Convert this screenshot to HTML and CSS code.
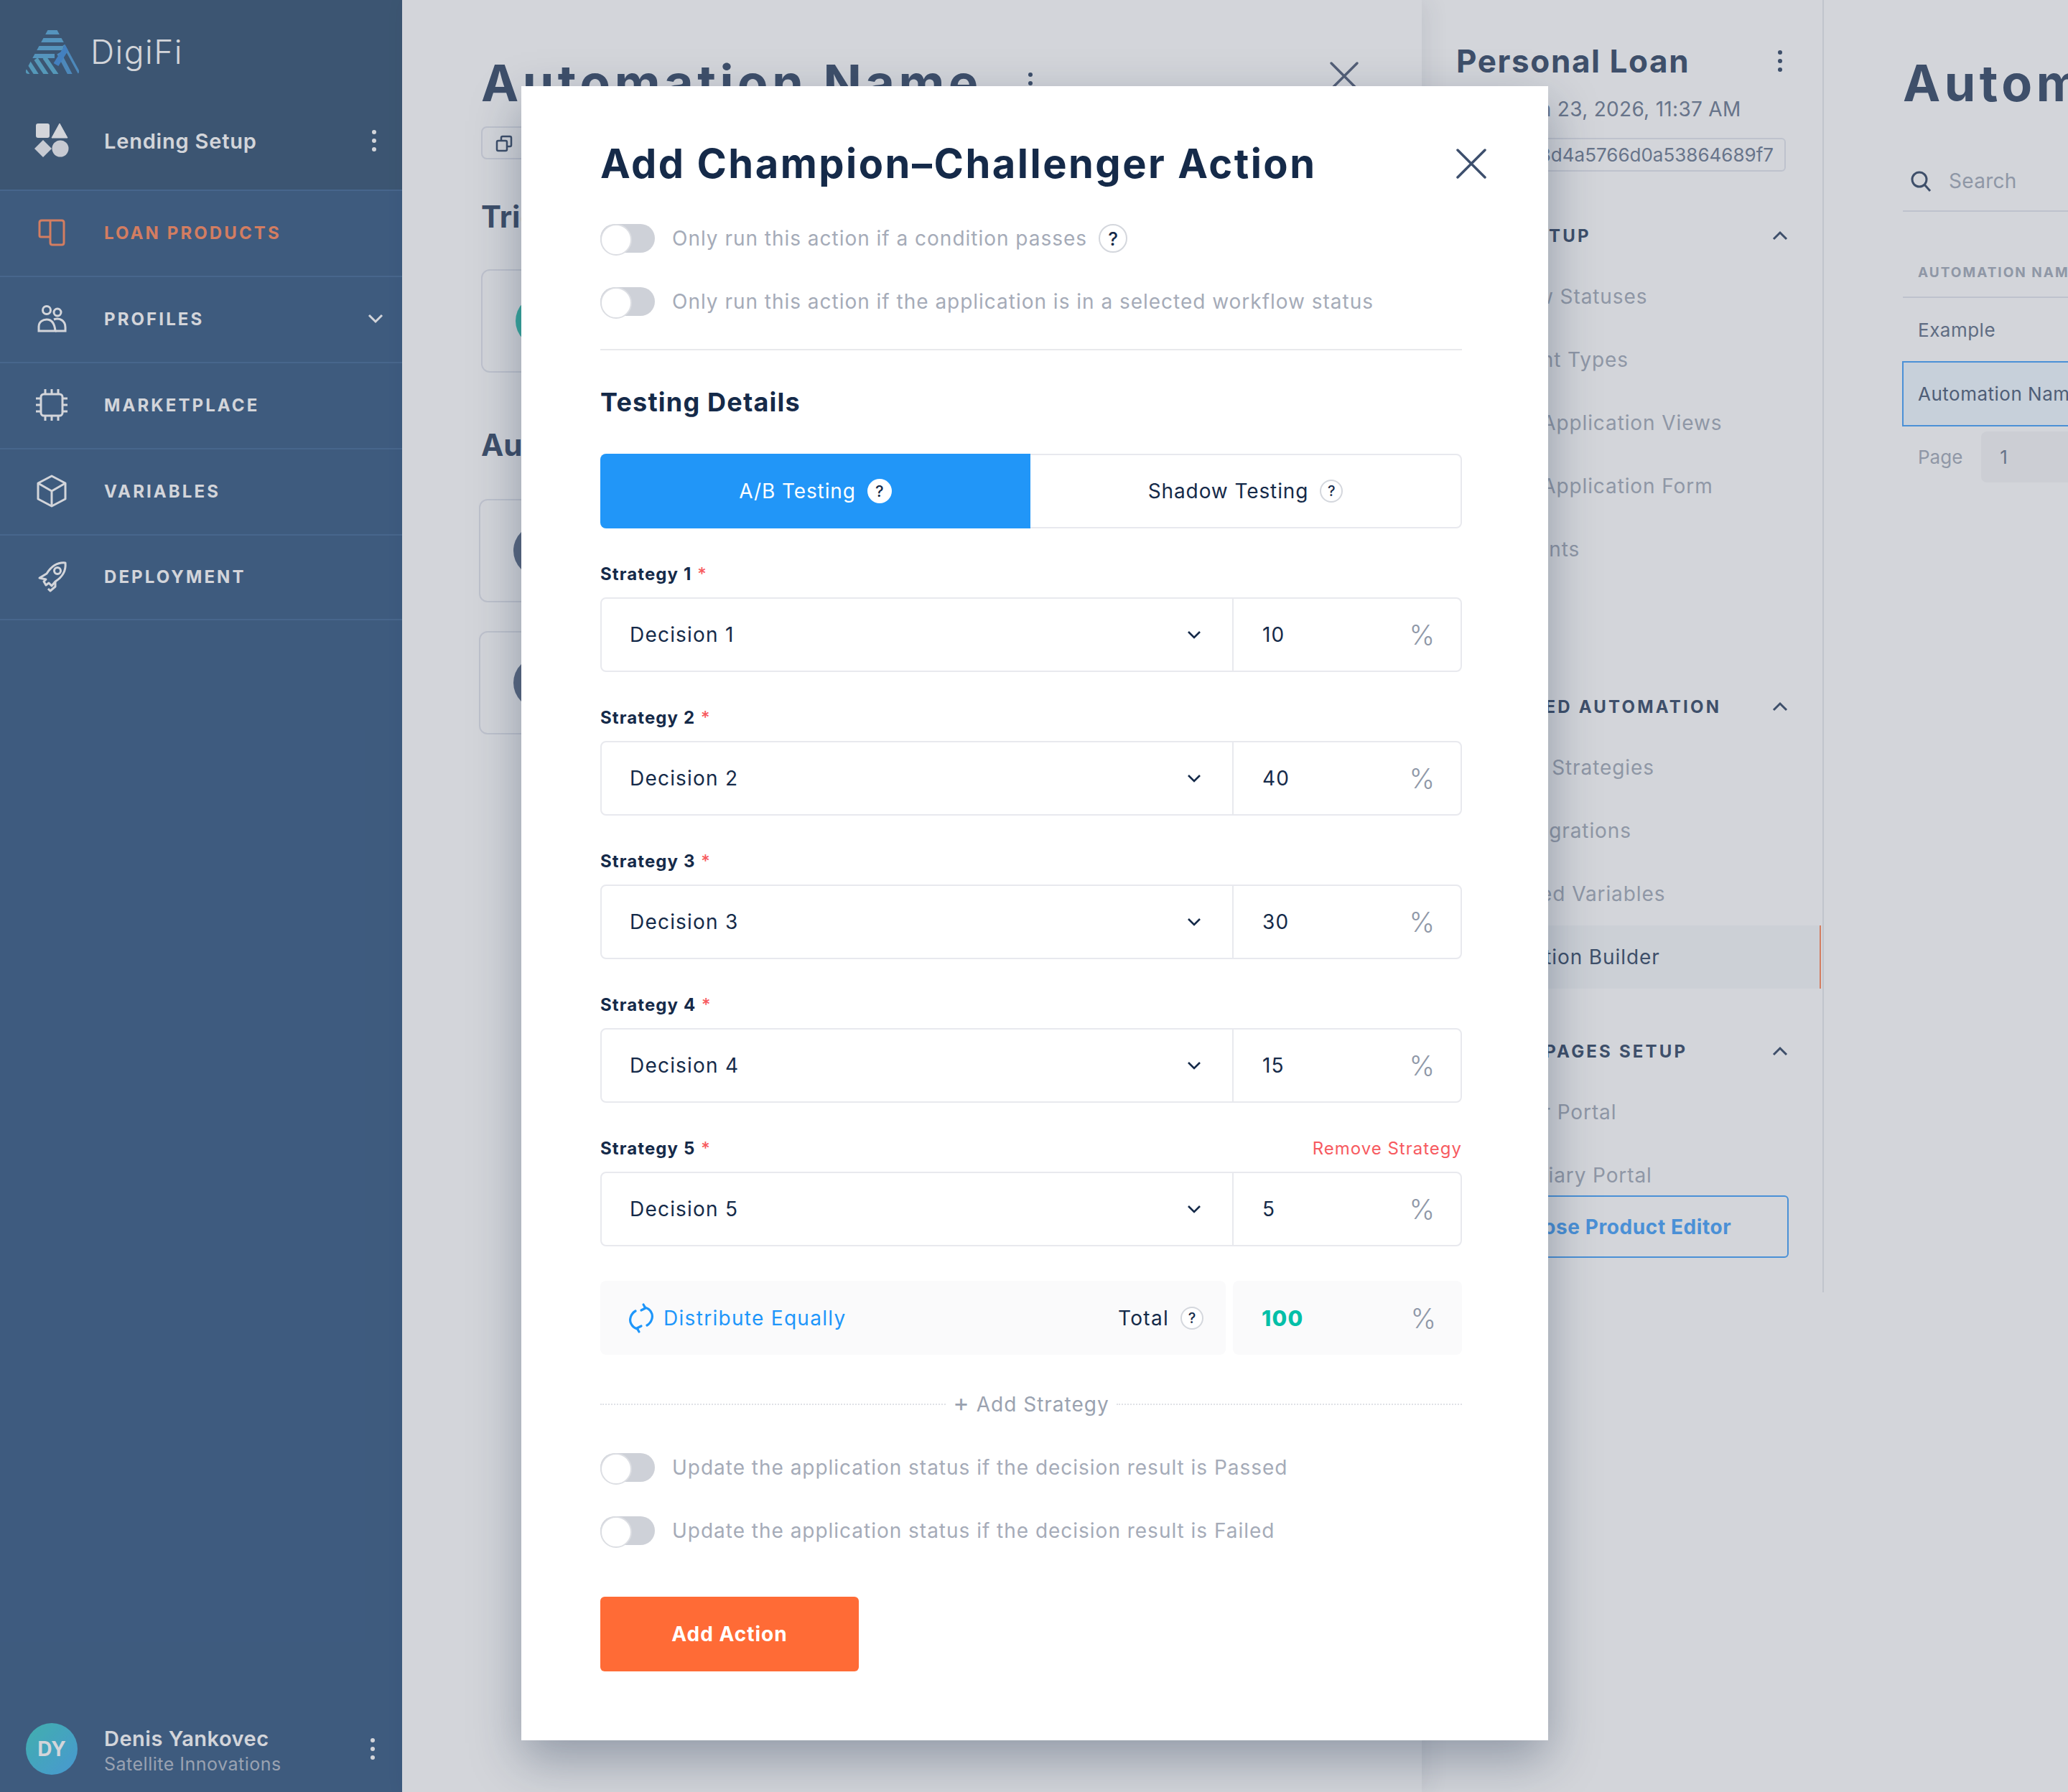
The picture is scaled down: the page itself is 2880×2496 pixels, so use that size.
FILE: index.html
```html
<!DOCTYPE html>
<html lang="en">
<head>
	<meta charset="UTF-8">
	<title>Add Champion-Challenger Action</title>
	<link rel="stylesheet" href="styles.css">
</head>
<body>
<div class="app">
	<aside class="sidebar">
		<div class="sideTop">
			<div class="logo">
				<svg width="74" height="64" viewBox="0 0 74 64">
					<defs>
						<clipPath id="logoClip"><path d="M31 1 Q37 -2 43 1 L74 58 Q75 63 70 63 L4 63 Q-1 63 0 58 Z"/></clipPath>
					</defs>
					<g clip-path="url(#logoClip)" fill="none" stroke-width="6">
						<path d="M0 5H74M0 16H74M0 27H52M0 38H40" stroke="#62aedb"/>
						<path d="M-10 46L8 72M2 44L20 72M14 42L34 72M26 40L48 72" stroke="#62b3d6"/>
						<path d="M54 22L78 66M46 34L66 72" stroke="#589fd8"/>
						<path d="M62 18L42 50" stroke="#4c95df" stroke-width="8"/>
					</g>
				</svg>
				<span class="logoText">DigiFi</span>
			</div>
			<div class="product">
				<svg class="navIcon" width="48" height="48" viewBox="0 0 48 48">
					<rect x="2" y="0" width="19" height="20" rx="3" fill="#fff"/>
					<path d="M35 0 L46 20 H24 Z" fill="#fff" stroke="#fff" stroke-linejoin="round"/>
					<path d="M12 23 L24 35 L12 47 L0 35 Z" fill="#f1f2f6"/>
					<circle cx="36" cy="35" r="11.5" fill="#f1f2f6"/>
				</svg>
				<span class="productName">Lending Setup</span>
				<span class="dots"><i></i><i></i><i></i></span>
			</div>
		</div>
		<nav>
			<a class="navItem active">
				<svg class="navIcon" width="48" height="48" viewBox="0 0 48 48" fill="none" stroke="#ff9268" stroke-width="3" stroke-linejoin="round"><path d="M22 30H9Q7 30 7 28V10Q7 7 10 7H38Q41 7 41 10V38Q41 41 38 41H25Q22 41 22 38V7"/></svg>
				LOAN PRODUCTS
			</a>
			<a class="navItem">
				<svg class="navIcon" width="48" height="48" viewBox="0 0 48 48" fill="none" stroke="#fff" stroke-width="3"><circle cx="17" cy="12" r="5.5"/><circle cx="32" cy="15" r="5"/><path d="M6 41V35C6 28 12 25 17 25C24 25 28 30 29 41Z M6 41H12"/><path d="M27 25C34 22 43 26 43 36V41H29"/></svg>
				PROFILES
				<svg class="navChevron" width="22" height="14" viewBox="0 0 22 14" fill="none" stroke="#fff" stroke-width="3"><path d="M2 2L11 11L20 2"/></svg>
			</a>
			<a class="navItem">
				<svg class="navIcon" width="48" height="48" viewBox="0 0 48 48" fill="none" stroke="#fff" stroke-width="3"><rect x="9" y="9" width="30" height="30" rx="4"/><path d="M15 9V2M24 9V2M33 9V2M15 46V39M24 46V39M33 46V39M9 15H2M9 24H2M9 33H2M46 15H39M46 24H39M46 33H39"/></svg>
				MARKETPLACE
			</a>
			<a class="navItem">
				<svg class="navIcon" width="48" height="48" viewBox="0 0 48 48" fill="none" stroke="#fff" stroke-width="3" stroke-linejoin="round"><path d="M24 3L43 13V35L24 45L5 35V13Z"/><path d="M5 13L24 24L43 13M24 24V45"/></svg>
				VARIABLES
			</a>
			<a class="navItem">
				<svg class="navIcon" width="48" height="48" viewBox="0 0 48 48" fill="none" stroke="#fff" stroke-width="3" stroke-linejoin="round"><path d="M17 20C24 9 33 4 43 5C44 15 40 24 29 31L24 37L20 33L16 36L13 31L16 28L7 26Z"/><path d="M29 31L29 38L22 44L19 41"/><circle cx="32" cy="16" r="4.5"/></svg>
				DEPLOYMENT
			</a>
		</nav>
		<div class="userBox">
			<span class="avatar">DY</span>
			<div class="userText">
				<div class="userName">Denis Yankovec</div>
				<div class="userOrg">Satellite Innovations</div>
			</div>
			<span class="dots"><i></i><i></i><i></i></span>
		</div>
		<div class="collapseTab">
			<svg width="12" height="20" viewBox="0 0 12 20" fill="none" stroke="#fff" stroke-width="2.5"><path d="M10 2L3 10L10 18"/></svg>
		</div>
	</aside>

	<section class="panel panelOne">
		<div class="panelHead">
			<h1 class="bigTitle">Automation Name</h1>
			<span class="dots dotsDark"><i></i><i></i><i></i></span>
			<svg class="panelClose" width="44" height="44" viewBox="0 0 44 44" fill="none" stroke="#5f6c84" stroke-width="3.5" stroke-linecap="round"><path d="M4 4L40 40M40 4L4 40"/></svg>
		</div>
		<div class="copyChip">
			<svg width="24" height="24" viewBox="0 0 24 24" fill="none" stroke="#455874" stroke-width="2.5"><rect x="2" y="8" width="14" height="14" rx="2"/><path d="M8 8V4Q8 2 10 2H20Q22 2 22 4V14Q22 16 20 16H16"/></svg>
		</div>
		<h2 class="subTitle">Trigger Events</h2>
		<div class="flowCard"><span class="flowDot teal"></span></div>
		<h2 class="subTitle subTitleLow">Automation Steps</h2>
		<div class="flowCard lower"><span class="flowDot"></span></div>
		<div class="flowCard lowest"><span class="flowDot"></span></div>
	</section>

	<section class="panel panelTwo">
		<div class="loanHead">
			<h2 class="loanTitle">Personal Loan</h2>
			<span class="dots dotsDark"><i></i><i></i><i></i></span>
		</div>
		<div class="loanDate">Updated Jan 23, 2026, 11:37 AM</div>
		<div class="loanId"><span>68d4a5766d0a53864689f7</span></div>

		<div class="groupHead first">FORM SETUP <svg width="22" height="14" viewBox="0 0 22 14" fill="none" stroke="#455874" stroke-width="3"><path d="M2 12L11 3L20 12"/></svg></div>
		<div class="groupItem">Workflow Statuses</div>
		<div class="groupItem">Document Types</div>
		<div class="groupItem">Custom Application Views</div>
		<div class="groupItem">Custom Application Form</div>
		<div class="groupItem">Agreements</div>

		<div class="groupHead second">ADVANCED AUTOMATION <svg width="22" height="14" viewBox="0 0 22 14" fill="none" stroke="#455874" stroke-width="3"><path d="M2 12L11 3L20 12"/></svg></div>
		<div class="groupItem">Decision Strategies</div>
		<div class="groupItem">Data Integrations</div>
		<div class="groupItem">Calculated Variables</div>
		<div class="groupItem current">Automation Builder</div>

		<div class="groupHead third">PORTAL PAGES SETUP <svg width="22" height="14" viewBox="0 0 22 14" fill="none" stroke="#455874" stroke-width="3"><path d="M2 12L11 3L20 12"/></svg></div>
		<div class="groupItem">Borrower Portal</div>
		<div class="groupItem">Intermediary Portal</div>
		<div class="closeEditor">Close Product Editor</div>
	</section>

	<section class="panel panelThree">
		<h1 class="bigTitle">Automation Name</h1>
		<div class="searchBar">
			<svg width="30" height="30" viewBox="0 0 30 30" fill="none" stroke="#455874" stroke-width="3"><circle cx="13" cy="13" r="10"/><path d="M20 20L28 29"/></svg>
			<span>Search</span>
		</div>
		<div class="tableHead">AUTOMATION NAME</div>
		<div class="tableRow">Example</div>
		<div class="tableRow selected">Automation Name</div>
		<div class="pager"><span>Page</span><span class="pageBox">1</span></div>
	</section>
</div>

<div class="overlay"></div>

<div class="modal">
	<div class="modalHead">
		<h1>Add Champion–Challenger Action</h1>
		<svg class="modalClose" width="44" height="44" viewBox="0 0 44 44" fill="none" stroke="#3d4f6d" stroke-width="3.5" stroke-linecap="round"><path d="M3 3L41 41M41 3L3 41"/></svg>
	</div>

	<div class="toggleRow firstToggle"><span class="toggle"></span><span>Only run this action if a condition passes</span><span class="help">?</span></div>
	<div class="toggleRow"><span class="toggle"></span><span>Only run this action if the application is in a selected workflow status</span></div>
	<div class="divider"></div>

	<h2 class="sectionTitle">Testing Details</h2>
	<div class="tabs">
		<div class="tab tabActive">A/B Testing <span class="help">?</span></div>
		<div class="tab">Shadow Testing <span class="help">?</span></div>
	</div>

	<div class="strategy">
		<div class="strategyLabel"><span>Strategy 1 <em>*</em></span></div>
		<div class="strategyBox">
			<div class="strategySelect">Decision 1<svg width="20" height="12" viewBox="0 0 20 12" fill="none" stroke="#152a49" stroke-width="2.6"><path d="M2 2L10 10L18 2"/></svg></div>
			<div class="strategyPercent"><span>10</span><span class="pct">%</span></div>
		</div>
	</div>
	<div class="strategy">
		<div class="strategyLabel"><span>Strategy 2 <em>*</em></span></div>
		<div class="strategyBox">
			<div class="strategySelect">Decision 2<svg width="20" height="12" viewBox="0 0 20 12" fill="none" stroke="#152a49" stroke-width="2.6"><path d="M2 2L10 10L18 2"/></svg></div>
			<div class="strategyPercent"><span>40</span><span class="pct">%</span></div>
		</div>
	</div>
	<div class="strategy">
		<div class="strategyLabel"><span>Strategy 3 <em>*</em></span></div>
		<div class="strategyBox">
			<div class="strategySelect">Decision 3<svg width="20" height="12" viewBox="0 0 20 12" fill="none" stroke="#152a49" stroke-width="2.6"><path d="M2 2L10 10L18 2"/></svg></div>
			<div class="strategyPercent"><span>30</span><span class="pct">%</span></div>
		</div>
	</div>
	<div class="strategy">
		<div class="strategyLabel"><span>Strategy 4 <em>*</em></span></div>
		<div class="strategyBox">
			<div class="strategySelect">Decision 4<svg width="20" height="12" viewBox="0 0 20 12" fill="none" stroke="#152a49" stroke-width="2.6"><path d="M2 2L10 10L18 2"/></svg></div>
			<div class="strategyPercent"><span>15</span><span class="pct">%</span></div>
		</div>
	</div>
	<div class="strategy">
		<div class="strategyLabel"><span>Strategy 5 <em>*</em></span><a class="removeLink">Remove Strategy</a></div>
		<div class="strategyBox">
			<div class="strategySelect">Decision 5<svg width="20" height="12" viewBox="0 0 20 12" fill="none" stroke="#152a49" stroke-width="2.6"><path d="M2 2L10 10L18 2"/></svg></div>
			<div class="strategyPercent"><span>5</span><span class="pct">%</span></div>
		</div>
	</div>

	<div class="totalRow">
		<div class="totalLeft">
			<svg width="36" height="44" viewBox="0 0 36 44" fill="none" stroke="#1e96fa" stroke-width="3.2" stroke-linecap="round" stroke-linejoin="round">
				<path d="M10 12C3 16 1 25 4 30C6 34 9 36 13 37"/><path d="M21 3L24 8L18 11"/><path d="M26 32C33 28 35 19 32 14C30 10 27 8 23 7"/><path d="M15 41L12 36L18 33"/>
			</svg>
			<span class="distribute">Distribute Equally</span>
			<span class="totalLabel">Total</span>
			<span class="help">?</span>
		</div>
		<div class="totalRight"><span class="totalValue">100</span><span class="pct">%</span></div>
	</div>

	<div class="addStrategy"><span><b>+</b> Add Strategy</span></div>

	<div class="toggleRow bottomToggle"><span class="toggle"></span><span>Update the application status if the decision result is Passed</span></div>
	<div class="toggleRow"><span class="toggle"></span><span>Update the application status if the decision result is Failed</span></div>

	<button class="addAction">Add Action</button>
</div>
</body>
</html>
```
FILE: styles.css
```css
* {
	box-sizing: border-box;
}
html, body {
	margin: 0;
	height: 2496px;
	overflow: hidden;
}
body {
	position: relative;
	font-family: Inter, "Liberation Sans", sans-serif;
	background: #fff;
}
h1, h2 {
	margin: 0;
}

.app {
	display: flex;
	height: 2496px;
}

/* sidebar */
.sidebar {
	position: relative;
	flex: 0 0 560px;
	display: flex;
	flex-direction: column;
	background: #45678d;
	color: #fff;
}
.sideTop {
	height: 264px;
	padding: 40px 0 0 36px;
	background: #43607d;
}
.logo {
	display: flex;
	align-items: center;
	gap: 16px;
}
.logoText {
	font-size: 46px;
	font-weight: 300;
	letter-spacing: 1.5px;
	color: #fff;
}
.product {
	display: flex;
	align-items: center;
	margin-top: 68px;
	height: 48px;
	padding-left: 12px;
}
.productName {
	margin-left: 49px;
	font-size: 29px;
	font-weight: 600;
	letter-spacing: .8px;
}
.dots {
	display: flex;
	flex-direction: column;
	gap: 6px;
	margin-left: auto;
	margin-right: 36px;
}
.dots i {
	display: block;
	width: 6px;
	height: 6px;
	border-radius: 50%;
	background: #fff;
}
.dotsDark i {
	background: #455874;
}
.navItem {
	display: flex;
	align-items: center;
	height: 120px;
	padding: 0 0 2px 48px;
	gap: 49px;
	border-top: 2px solid #51759e;
	font-size: 24px;
	font-weight: 700;
	letter-spacing: 3.1px;
}
.navItem:last-child {
	border-bottom: 2px solid #51759e;
}
.navItem.active {
	color: #ff9268;
}
.navChevron {
	margin-left: auto;
	margin-right: 26px;
}
.userBox {
	display: flex;
	align-items: center;
	margin-top: auto;
	height: 72px;
	margin-bottom: 24px;
	padding-left: 36px;
}
.avatar {
	flex: 0 0 72px;
	height: 72px;
	border-radius: 50%;
	background: linear-gradient(135deg, #49d0c8, #52b3f4);
	display: flex;
	align-items: center;
	justify-content: center;
	font-size: 28px;
	font-weight: 700;
}
.userText {
	margin: 6px 0 0 37px;
}
.userName {
	font-size: 29px;
	font-weight: 600;
	line-height: 36px;
	letter-spacing: .5px;
}
.userOrg {
	font-size: 25px;
	line-height: 34px;
	letter-spacing: .5px;
	color: #b8c0cc;
}
.userBox .dots {
	margin-right: 38px;
}
.collapseTab {
	position: absolute;
	left: 560px;
	top: 1188px;
	width: 31px;
	height: 119px;
	display: flex;
	align-items: center;
	justify-content: center;
	background: #ff9370;
	border-radius: 0 16px 16px 0;
}

/* panels behind the dialog */
.panel {
	height: 100%;
	overflow: hidden;
	color: #455874;
}
.panelOne {
	position: relative;
	z-index: 2;
	flex: 0 0 1420px;
	padding: 70px 0 0 110px;
	background: #fff;
	box-shadow: 8px 0 30px rgba(35, 45, 70, .09);
}
.panelHead {
	display: flex;
	align-items: center;
	height: 92px;
}
.panelHead .dots {
	margin-left: 64px;
	margin-right: 0;
}
.panelClose {
	margin-left: auto;
	margin-right: 86px;
	margin-top: -20px;
}
.bigTitle {
	font-size: 70px;
	font-weight: 700;
	line-height: 92px;
	white-space: nowrap;
	letter-spacing: 5.5px;
}
.copyChip {
	width: 110px;
	height: 46px;
	margin-top: 14px;
	padding: 10px 0 0 18px;
	border: 2px solid #e5e8ef;
	border-radius: 8px;
}
.subTitle {
	margin-top: 54px;
	font-size: 42px;
	line-height: 52px;
	font-weight: 700;
	white-space: nowrap;
}
.subTitleLow {
	margin-top: 75px;
}
.flowCard {
	height: 144px;
	margin: 47px 60px 0 0;
	padding: 34px 0 0 46px;
	border: 2px solid #e5e8ef;
	border-radius: 12px;
}
.flowCard.lower {
	margin-left: -3px;
	margin-top: 49px;
}
.flowCard.lowest {
	margin-left: -3px;
	margin-top: 40px;
}
.flowDot {
	display: block;
	width: 72px;
	height: 72px;
	border-radius: 50%;
	background: #697991;
}
.flowDot.teal {
	background: #40c9b6;
}

.panelTwo {
	flex: 0 0 560px;
	height: 1800px;
	padding: 56px 0 0 48px;
	background: #fff;
	border-right: 2px solid #e8eaee;
}
.loanHead {
	display: flex;
	align-items: center;
	height: 58px;
}
.loanTitle {
	font-size: 44px;
	font-weight: 700;
	letter-spacing: 1.6px;
}
.loanHead .dots {
	margin-right: 56px;
}
.loanDate {
	margin-top: 20px;
	margin-left: -40px;
	font-size: 28px;
	line-height: 36px;
	letter-spacing: .3px;
	color: #79869b;
	white-space: nowrap;
}
.loanId {
	width: 459px;
	height: 47px;
	margin: 22px 0 0 0;
	border: 2px solid #e5e8ef;
	border-radius: 6px;
	font-size: 26px;
	line-height: 43px;
	color: #79869b;
	white-space: nowrap;
	text-align: right;
	padding-right: 15px;
}
.groupHead {
	display: flex;
	align-items: center;
	justify-content: space-between;
	height: 40px;
	padding-right: 48px;
	font-size: 24px;
	font-weight: 700;
	letter-spacing: 3.2px;
	white-space: nowrap;
}
.groupHead.first {
	margin-top: 69px;
}
.groupHead.second {
	margin-top: 155px;
}
.groupHead.third {
	margin-top: 67px;
}
.groupHead svg {
	flex: none;
}
.groupItem {
	height: 88px;
	margin-right: 2px;
	padding-left: 3px;
	display: flex;
	align-items: center;
	font-size: 28px;
	letter-spacing: .9px;
	color: #aab2be;
	white-space: nowrap;
}
.groupHead + .groupItem {
	margin-top: 21px;
}
.groupItem.current {
	padding-left: 16px;
	color: #455874;
	background: #f7f9fa;
	border-right: 2px solid #ff9268;
}
.closeEditor {
	width: 463px;
	height: 87px;
	margin-top: -16px;
	padding-left: 12px;
	border: 2px solid #54a9fa;
	border-radius: 6px;
	display: flex;
	align-items: center;
	justify-content: center;
	color: #54a9fa;
	font-size: 28px;
	font-weight: 700;
	letter-spacing: .6px;
	white-space: nowrap;
}

.panelThree {
	flex: 1;
	min-width: 0;
	padding: 70px 0 0 110px;
	background: #fff;
}
.searchBar {
	display: flex;
	align-items: center;
	gap: 24px;
	height: 73px;
	margin-top: 60px;
	padding: 0 0 12px 10px;
	border-bottom: 2px solid #e5e8ef;
	font-size: 28px;
	letter-spacing: .3px;
	color: #aab2be;
	width: 400px;
}
.tableHead {
	margin-top: 60px;
	height: 60px;
	padding-left: 21px;
	border-bottom: 2px solid #e5e8ef;
	font-size: 19px;
	line-height: 50px;
	font-weight: 700;
	letter-spacing: 2px;
	color: #aab2be;
	white-space: nowrap;
	width: 400px;
}
.tableRow {
	display: flex;
	align-items: center;
	height: 88px;
	padding-left: 21px;
	font-size: 26px;
	letter-spacing: .5px;
	color: #6e7c92;
	white-space: nowrap;
	width: 400px;
}
.tableRow.selected {
	height: 91px;
	margin-left: -1px;
	padding-left: 20px;
	background: #f1f9ff;
	border: 2px solid #54a9fa;
	border-right: none;
	color: #5a6b84;
}
.pager {
	display: flex;
	align-items: center;
	gap: 26px;
	margin-top: 7px;
	padding-left: 21px;
	font-size: 26px;
	color: #aab2be;
}
.pageBox {
	flex: none;
	width: 200px;
	height: 71px;
	padding-left: 26px;
	line-height: 71px;
	background: #f7f7f8;
	border-radius: 8px;
	color: #79869b;
}

.overlay {
	position: absolute;
	left: 0;
	top: 0;
	right: 0;
	bottom: 0;
	z-index: 5;
	background: rgba(35, 45, 70, .2);
}

/* dialog */
.modal {
	position: absolute;
	z-index: 6;
	left: 726px;
	top: 120px;
	width: 1430px;
	height: 2304px;
	padding: 74px 120px 0 110px;
	background: #fff;
	box-shadow: 0 26px 64px rgba(19, 39, 67, .34);
	color: #152a49;
}
.modalHead {
	position: relative;
	height: 68px;
}
.modalHead h1 {
	font-size: 56px;
	line-height: 68px;
	font-weight: 700;
	letter-spacing: 2.5px;
	white-space: nowrap;
}
.modalClose {
	position: absolute;
	right: -35px;
	top: 12px;
}
.toggleRow {
	display: flex;
	align-items: center;
	height: 40px;
	margin-top: 48px;
	font-size: 28px;
	letter-spacing: .98px;
	color: #a5abb8;
	white-space: nowrap;
}
.firstToggle {
	margin-top: 50px;
}
.toggle {
	position: relative;
	flex: 0 0 76px;
	height: 40px;
	margin-right: 24px;
	border-radius: 20px;
	background: #ced1d8;
}
.toggle::before {
	content: "";
	position: absolute;
	left: 0;
	top: 0;
	width: 40px;
	height: 40px;
	border-radius: 50%;
	background: #fff;
	border: 2px solid #dcdee3;
}
.help {
	flex: none;
	display: inline-flex;
	align-items: center;
	justify-content: center;
	width: 40px;
	height: 40px;
	margin-left: 16px;
	border: 2px solid #d4d7dd;
	border-radius: 50%;
	font-size: 26px;
	font-weight: 500;
	letter-spacing: 0;
	color: #152a49;
	background: #fff;
}
.divider {
	height: 2px;
	margin-top: 46px;
	background: #e8e9ec;
}
.sectionTitle {
	margin-top: 50px;
	font-size: 36px;
	line-height: 44px;
	font-weight: 700;
	letter-spacing: 1.2px;
}
.tabs {
	display: flex;
	height: 104px;
	margin-top: 50px;
}
.tab {
	flex: 1;
	display: flex;
	align-items: center;
	justify-content: center;
	border: 2px solid #e8e9ee;
	border-left: none;
	border-radius: 0 8px 8px 0;
	font-size: 28px;
	letter-spacing: .9px;
}
.tab .help {
	width: 32px;
	height: 32px;
	font-size: 20px;
}
.tabActive {
	background: #2196f8;
	border: none;
	border-radius: 8px 0 0 8px;
	color: #fff;
}
.tabActive .help {
	border: none;
	width: 34px;
	height: 34px;
	font-size: 22px;
}
.strategy {
	margin-top: 47px;
}
.strategyLabel {
	display: flex;
	justify-content: space-between;
	height: 32px;
	line-height: 34px;
	font-size: 24px;
	font-weight: 700;
	letter-spacing: 1.1px;
}
.strategyLabel em {
	margin-left: 1px;
	font-style: normal;
	font-weight: 500;
	color: #f75a5f;
}
.removeLink {
	font-size: 24px;
	font-weight: 400;
	letter-spacing: 1px;
	color: #f75a5f;
}
.strategyBox {
	display: flex;
	height: 104px;
	margin-top: 17px;
	border: 2px solid #e8e9ee;
	border-radius: 8px;
	font-size: 28px;
	letter-spacing: 1.2px;
}
.strategySelect {
	flex: 0 0 880px;
	display: flex;
	align-items: center;
	justify-content: space-between;
	padding: 0 43px 0 39px;
	border-right: 2px solid #e8e9ee;
}
.strategyPercent {
	flex: 1;
	display: flex;
	align-items: center;
	justify-content: space-between;
	padding: 0 36px 0 40px;
}
.pct {
	font-size: 38px;
	font-weight: 300;
	letter-spacing: 0;
	color: #8f98a8;
}
.totalRow {
	display: flex;
	justify-content: space-between;
	height: 103px;
	margin-top: 48px;
	font-size: 28px;
	letter-spacing: 1.3px;
}
.totalLeft {
	flex: 0 0 871px;
	display: flex;
	align-items: center;
	padding: 0 31px 0 39px;
	background: #fafafb;
	border-radius: 8px;
}
.distribute {
	margin-left: 13px;
	color: #1e96fa;
}
.totalLabel {
	margin-left: auto;
}
.totalLeft .help {
	width: 32px;
	height: 32px;
	font-size: 20px;
}
.totalRight {
	flex: 0 0 319px;
	display: flex;
	align-items: center;
	justify-content: space-between;
	padding: 0 36px 0 40px;
	background: #fafafb;
	border-radius: 8px;
}
.totalValue {
	font-size: 30px;
	font-weight: 800;
	color: #04bfa8;
}
.addStrategy {
	display: flex;
	align-items: center;
	gap: 10px;
	height: 36px;
	margin-top: 51px;
	font-size: 28px;
	letter-spacing: 1px;
	color: #9aa2b0;
	white-space: nowrap;
}
.addStrategy b {
	font-weight: 400;
	font-size: 34px;
	line-height: 30px;
}
.addStrategy::before, .addStrategy::after {
	content: "";
	flex: 1;
	border-top: 2px dotted #dfe1e6;
}
.bottomToggle {
	margin-top: 50px;
}
.addAction {
	display: block;
	width: 360px;
	height: 104px;
	margin-top: 72px;
	border: none;
	border-radius: 6px;
	background: #ff6b36;
	color: #fff;
	font-family: Inter, "Liberation Sans", sans-serif;
	font-size: 28px;
	font-weight: 700;
	letter-spacing: 1px;
}
```
